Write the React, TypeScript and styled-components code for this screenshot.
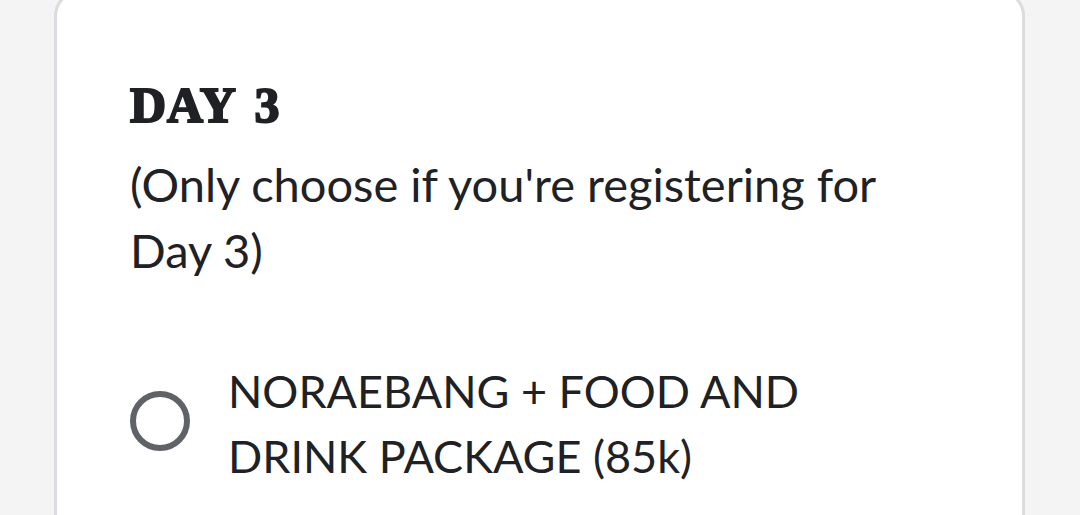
import styled, { createGlobalStyle } from 'styled-components';

const GlobalStyle = createGlobalStyle`
  html, body {
    margin: 0;
    padding: 0;
    background: #f4f4f4;
    overflow: hidden;
  }
`

const Page = styled.div`
  width: 1080px;
  height: 515px;
  padding: 0 55px 0 54px;
  box-sizing: border-box;
  overflow: hidden;
`

const Card = styled.section`
  margin-top: -10px;
  background: #fff;
  border: 3px solid #dadce0;
  border-radius: 26px;
  padding: 86px 73px 60px;
  min-height: 600px;
  box-sizing: border-box;
  color: #202124;
`

const Title = styled.h2`
  margin: 0;
  font-family: "Liberation Serif", "Times New Roman", serif;
  font-weight: 700;
  font-size: 50px;
  line-height: 52px;
  letter-spacing: 1px;
  word-spacing: 6px;
  color: #202124;
  -webkit-text-stroke: 2px #202124;
`

const Description = styled.p`
  margin: 20px 0 0;
  max-width: 800px;
  font-family: "Lato", "Noto Sans", sans-serif;
  font-size: 47px;
  line-height: 66px;
`

const Options = styled.div`
  margin-top: 76px;
  display: flex;
  flex-direction: column;
`

const Option = styled.label`
  display: flex;
  align-items: center;
  gap: 38px;
  cursor: pointer;
`

const Radio = styled.span`
  flex: none;
  width: 48px;
  height: 48px;
  margin-top: -6px;
  border: 6px solid #5f6368;
  border-radius: 50%;
`

const OptionText = styled.span`
  font-family: "Lato", "Noto Sans", sans-serif;
  font-size: 45px;
  line-height: 65px;
  max-width: 600px;
`

export default function App() {
  return (
    <>
      <GlobalStyle />
      <Page>
        <Card>
          <Title>DAY 3</Title>
          <Description>(Only choose if you're registering for Day 3)</Description>
          <Options>
            <Option>
              <Radio />
              <OptionText>NORAEBANG + FOOD AND DRINK PACKAGE (85k)</OptionText>
            </Option>
          </Options>
        </Card>
      </Page>
    </>
  )
}
